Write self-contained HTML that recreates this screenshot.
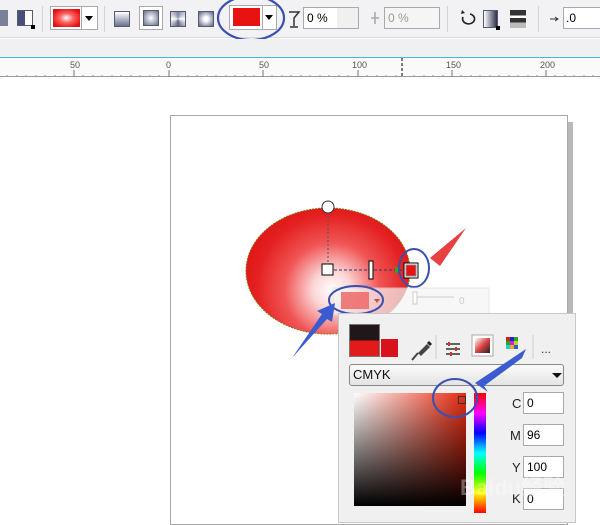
<!DOCTYPE html>
<html><head><meta charset="utf-8"><style>
*{margin:0;padding:0;box-sizing:border-box}
body{width:600px;height:521px;overflow:hidden;background:#fff;font-family:"Liberation Sans",sans-serif;position:relative}
.a{position:absolute}
.tb{left:0;top:0;width:600px;height:38px;background:#f2f2f4;border-bottom:1px solid #d8d8dc}
.sep{width:1px;height:26px;top:6px;background:#d4d4d8}
.box{border:1px solid #a9a9b0;background:#fff}
.ic{width:16px;height:16px;border:1px solid #555a70}
</style></head><body>
<div class="a tb"></div>
<div class="a" style="left:0;top:10px;width:8px;height:16px;background:#7a8098"></div>
<div class="a ic" style="left:17px;top:10px;background:linear-gradient(90deg,#4a5078 50%,#fff 50%)"></div>
<div class="a" style="left:31px;top:25px;width:4px;height:4px;background:#000"></div>
<div class="a sep" style="left:42px"></div>
<div class="a box" style="left:50px;top:6px;width:48px;height:24px;background:#fff"></div>
<div class="a" style="left:53px;top:9px;width:27px;height:18px;background:radial-gradient(ellipse at center,#fff 0,#f66 35%,#e21010 80%)"></div>
<div class="a" style="left:81px;top:7px;width:1px;height:22px;background:#a9a9b0"></div>
<div class="a" style="left:85px;top:16px;border:4px solid transparent;border-top:5px solid #000"></div>
<div class="a sep" style="left:104px"></div>
<div class="a ic" style="left:114px;top:11px;background:linear-gradient(#fff,#6a708e)"></div>
<div class="a box" style="left:139px;top:6px;width:24px;height:24px"></div>
<div class="a ic" style="left:143px;top:10px;background:radial-gradient(#fff,#6a708e)"></div>
<div class="a ic" style="left:170px;top:11px;background:conic-gradient(#8088a8,#fff,#5a6080,#fff,#8088a8)"></div>
<div class="a ic" style="left:198px;top:11px;background:radial-gradient(#fff 20%,#5a6080)"></div>
<div class="a box" style="left:229px;top:5px;width:48px;height:25px;background:#fff"></div>
<div class="a" style="left:233px;top:8px;width:27px;height:18px;background:#e81212"></div>
<div class="a" style="left:262px;top:6px;width:1px;height:23px;background:#a9a9b0"></div>
<div class="a" style="left:265px;top:15px;border:4px solid transparent;border-top:5px solid #000"></div>
<svg class="a" style="left:0;top:0" width="600" height="80">
<ellipse cx="251" cy="18" rx="33" ry="22" fill="none" stroke="#3a4fb0" stroke-width="2.2"/>
<path d="M289 12h10l-5 6v8M290 27h8" stroke="#333" fill="none" stroke-width="1.5"/>
<path d="M344 18h8M348 12v12M344 20h8" stroke="#222" stroke-width="1.6"/>
<path d="M371 18h8M375 12v12" stroke="#aaa" stroke-width="1.6"/>
<path d="M470 14a6 5 0 1 1-7 3" stroke="#222" fill="none" stroke-width="1.6"/>
<path d="M461 14l1-4 3 3z" fill="#222"/>
<path d="M550 19h8M555 17l3 2-3 2" stroke="#333" fill="none" stroke-width="1"/>
</svg>
<div class="a box" style="left:303px;top:7px;width:56px;height:22px;font-size:12px;line-height:20px;padding-left:3px">0 %</div>
<div class="a" style="left:337px;top:8px;width:21px;height:20px;background:#f0f0f0"></div>
<div class="a box" style="left:384px;top:7px;width:56px;height:22px;font-size:12px;line-height:20px;padding-left:3px;color:#999;background:#f5f5f5">0 %</div>
<div class="a sep" style="left:447px"></div>
<div class="a ic" style="left:483px;top:10px;width:15px;height:18px;background:linear-gradient(90deg,#fff,#2a2f48)"></div>
<div class="a" style="left:496px;top:26px;width:4px;height:4px;background:#000"></div>
<div class="a" style="left:510px;top:10px;width:16px;height:18px;background:linear-gradient(#333 0 30%,#fff 30% 45%,#333 45% 70%,#bbb 70%)"></div>
<div class="a sep" style="left:538px"></div>
<div class="a box" style="left:563px;top:7px;width:40px;height:22px;font-size:12px;line-height:20px;padding-left:2px">.0</div>
<div class="a" style="left:0;top:39px;width:600px;height:18px;background:#eef0f2"></div>
<div class="a" style="left:0;top:57px;width:600px;height:1px;background:#4ab3d8"></div>
<div class="a" style="left:0;top:58px;width:600px;height:19px;background:#fafafa;border-bottom:1px solid #9a9a9a"></div>
<svg class="a" style="left:0;top:58px" width="600" height="20" font-family="Liberation Sans" font-size="9" fill="#555">
<text x="70" y="10">50</text><text x="166" y="10">0</text><text x="259" y="10">50</text><text x="352" y="10">100</text><text x="446" y="10">150</text><text x="540" y="10">200</text>
<g stroke="#777" stroke-width="1">
<path d="M74 12v7M169 12v7M263 12v7M358 12v7M452 12v7M546 12v7"/>
</g>
<path d="M402 0v19" stroke="#000" stroke-dasharray="3 2"/>
<g stroke="#999"><path d="M7 17v2M17 17v2M26 17v2M36 17v2M45 17v2M55 17v2M64 17v2M83 17v2M93 17v2M102 17v2M112 17v2M121 17v2M131 17v2M140 17v2M150 17v2M159 17v2M178 17v2M188 17v2M197 17v2M207 17v2M216 17v2M226 17v2M235 17v2M245 17v2M254 17v2M272 17v2M282 17v2M291 17v2M301 17v2M310 17v2M320 17v2M329 17v2M339 17v2M348 17v2M367 17v2M377 17v2M386 17v2M396 17v2M414 17v2M424 17v2M433 17v2M443 17v2M461 17v2M471 17v2M480 17v2M490 17v2M499 17v2M509 17v2M518 17v2M528 17v2M537 17v2M555 17v2M565 17v2M574 17v2M584 17v2M593 17v2"/></g>
</svg>
<div class="a" style="left:567px;top:122px;width:6px;height:399px;background:#b8b8b8"></div>
<div class="a" style="left:170px;top:115px;width:398px;height:410px;border:1px solid #a8a8a8;background:#fff"></div>
<svg class="a" style="left:0;top:0" width="600" height="521">
<defs><radialGradient id="g" cx="332" cy="290" r="95" gradientUnits="userSpaceOnUse"><stop offset="0" stop-color="#fff"/><stop offset="0.2" stop-color="#fcd6d6"/><stop offset="0.5" stop-color="#f05555"/><stop offset="0.8" stop-color="#e42020"/><stop offset="1" stop-color="#df1414"/></radialGradient></defs>
<ellipse cx="328" cy="271" rx="82" ry="63" fill="url(#g)" stroke="#8a6a10" stroke-dasharray="2 1" stroke-width="1"/>
<path d="M328 212v58" stroke="#555" stroke-dasharray="2 2"/>
<path d="M334 270h70" stroke="#336" stroke-dasharray="3 2"/>
<circle cx="328" cy="207" r="6" fill="#fff" stroke="#333"/>
<rect x="322" y="264" width="11" height="11" fill="#fff" stroke="#000"/>
<rect x="369" y="261" width="4" height="18" fill="#fff" stroke="#000"/>
<path d="M395 266l5 4-5 4z" fill="#2a2"/>
<rect x="404" y="263" width="14" height="15" fill="#fff" stroke="#000"/>
<rect x="406" y="265" width="10" height="11" fill="#e81212" stroke="#888"/>
<ellipse cx="414" cy="268" rx="15" ry="19" fill="none" stroke="#3a4fb0" stroke-width="2"/>
<path d="M430 258l36-30-26 38z" fill="#e84040"/>
<rect x="333" y="288" width="156" height="27" fill="#f4f4f4" opacity="0.7" stroke="#ddd"/>
<rect x="341" y="292" width="28" height="17" fill="#ee6060" opacity="0.8"/>
<path d="M374 299l3 4 3-4z" fill="#b55"/>
<path d="M414 297h40" stroke="#ccc"/><rect x="413" y="292" width="4" height="12" fill="#fff" stroke="#ccc"/>
<text x="459" y="304" font-size="10" fill="#ccc" font-family="Liberation Sans">0</text>
<ellipse cx="356" cy="300" rx="27" ry="14" fill="none" stroke="#3a4fb0" stroke-width="2"/>
<path d="M292 358l30-44-5-3 18-8-3 19-5-3z" fill="#3b5bd0"/>
</svg>
<div class="a" style="left:338px;top:313px;width:238px;height:210px;background:#f0f0f0;border:1px solid #c8c8c8"></div>
<div class="a" style="left:349px;top:324px;width:31px;height:33px;border:1px solid #777;background:linear-gradient(#201818 50%,#e21a1a 50%)"></div>
<div class="a" style="left:381px;top:339px;width:17px;height:18px;background:#d8121c"></div>
<svg class="a" style="left:338px;top:313px" width="238" height="208">
<path d="M80 40l9-9 3 3-9 9z" fill="#444"/><path d="M90 29l3 3" stroke="#222" stroke-width="3"/><path d="M80 40l-6 7" stroke="#444" stroke-width="2"/>
<path d="M98 22v24" stroke="#ccc"/>
<path d="M108 31h14M108 36h14M108 41h14" stroke="#333" stroke-width="1.5"/><path d="M111 29v4M118 34v4M113 39v4" stroke="#c33" stroke-width="2"/>
<rect x="134" y="22" width="21" height="21" fill="#fff" stroke="#aaa"/>
<defs><linearGradient id="g2" x1="0" y1="0" x2="1" y2="1"><stop offset="0" stop-color="#fff"/><stop offset="0.5" stop-color="#d44"/><stop offset="1" stop-color="#222"/></linearGradient></defs>
<rect x="137" y="25" width="15" height="15" fill="url(#g2)"/>
<rect x="168" y="24" width="4" height="4" fill="#c22"/><rect x="172" y="24" width="4" height="4" fill="#22c"/><rect x="176" y="24" width="4" height="4" fill="#2a2"/>
<rect x="168" y="28" width="4" height="4" fill="#2a2"/><rect x="172" y="28" width="4" height="4" fill="#c2c"/><rect x="176" y="28" width="4" height="4" fill="#cc2"/>
<rect x="168" y="32" width="4" height="4" fill="#2cc"/><rect x="172" y="32" width="4" height="4" fill="#ea2"/><rect x="176" y="32" width="4" height="4" fill="#26c"/>
<path d="M195 22v24" stroke="#ccc"/>
<text x="203" y="40" font-size="12" fill="#333">...</text>
</svg>
<div class="a" style="left:349px;top:364px;width:215px;height:22px;border:1px solid #888;border-radius:3px;background:linear-gradient(#fafafa,#e4e4e4);font-size:13px;line-height:20px;padding-left:3px;color:#111">CMYK</div>
<div class="a" style="left:552px;top:373px;border:5px solid transparent;border-top:5px solid #111"></div>
<div class="a" style="left:354px;top:393px;width:112px;height:113px;background:linear-gradient(to bottom,rgba(0,0,0,0),#000),linear-gradient(to right,#fff,#e82a10)"></div>
<div class="a" style="left:458px;top:396px;width:8px;height:8px;border:1px solid #333"></div>
<div class="a" style="left:474px;top:393px;width:12px;height:120px;background:linear-gradient(#f00,#f0f,#00f,#0ff,#0f0,#ff0,#f00)"></div>
<svg class="a" style="left:0;top:0" width="600" height="521">
<ellipse cx="455" cy="398" rx="22" ry="19" fill="none" stroke="#3a4fb0" stroke-width="2"/>
<path d="M475 383l45-30 6-4-4 9-38 28 4 6z" fill="#3b5bd0"/>
</svg>
<div class="a" style="left:512px;top:396px;font-size:13px;color:#222">C</div>
<div class="a box" style="left:523px;top:392px;width:41px;height:22px;font-size:12px;line-height:20px;padding-left:3px">0</div>
<div class="a" style="left:510px;top:428px;font-size:13px;color:#222">M</div>
<div class="a box" style="left:523px;top:424px;width:41px;height:22px;font-size:12px;line-height:20px;padding-left:3px">96</div>
<div class="a" style="left:512px;top:460px;font-size:13px;color:#222">Y</div>
<div class="a box" style="left:523px;top:456px;width:41px;height:22px;font-size:12px;line-height:20px;padding-left:3px">100</div>
<div class="a" style="left:512px;top:491px;font-size:13px;color:#222">K</div>
<div class="a box" style="left:523px;top:488px;width:41px;height:22px;font-size:12px;line-height:20px;padding-left:3px">0</div>
<div class="a" style="left:460px;top:470px;font-size:22px;font-weight:bold;color:rgba(255,255,255,0.35)">Baidu经验</div>
</body></html>
